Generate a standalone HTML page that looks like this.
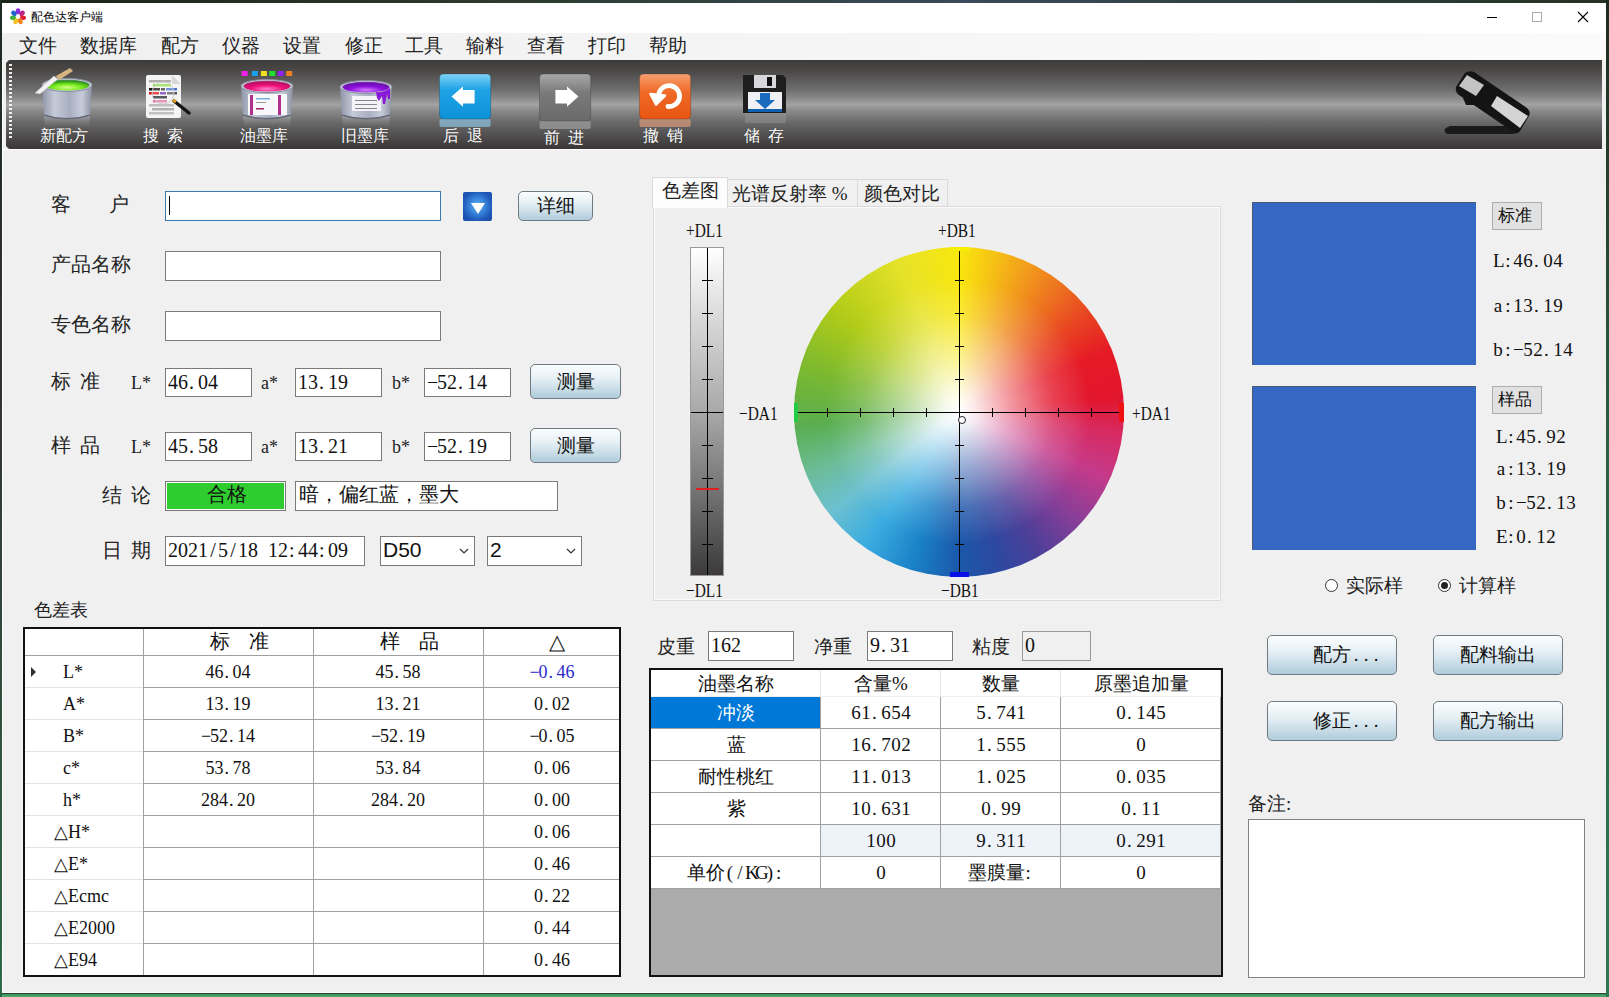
<!DOCTYPE html>
<html><head><meta charset="utf-8"><style>
*{box-sizing:border-box;margin:0;padding:0}
html,body{width:1609px;height:997px;overflow:hidden}
body{position:relative;background:#1f3a2a;font-family:"Liberation Sans",sans-serif;color:#000}
.a{position:absolute}
i.p{font-style:normal;display:inline-block;width:0.5em;text-align:left}
i.c{font-style:normal;display:inline-block;text-align:center}
i.d{font-style:normal;display:inline-block;text-align:left;text-indent:1px}
.inp{position:absolute;background:#fff;border:1px solid #7a7a7a}
.btn{position:absolute;border:1px solid #6f7b82;border-radius:5px;background:linear-gradient(#fbfdfe,#e6f0f5 40%,#b0ccdb);text-align:center;font-family:"Liberation Serif",serif;color:#111}
.lbl{position:absolute;font-family:"Liberation Serif",serif;font-size:19.5px;line-height:20px;color:#222;white-space:pre}
.num{position:absolute;font-family:"Liberation Serif",serif;font-size:20px;line-height:20px;color:#111;white-space:pre}
.tb{position:absolute;color:#fff;font-size:16px;line-height:16px;white-space:pre;text-shadow:0 0 1px #333}
.menu{position:absolute;top:36px;font-size:19px;line-height:20px;color:#222;white-space:pre}
.hl{position:absolute;height:1px}
.vl{position:absolute;width:1px}
.ct{position:absolute;font-family:"Liberation Serif",serif;font-size:18px;line-height:18px;color:#111;white-space:pre;text-align:center}
</style></head><body>

<div class="a" style="left:0;top:0;width:1609px;height:3px;background:linear-gradient(to right,#1a2418,#2b3a2a 30%,#3b4a5a 60%,#243322)"></div>
<div class="a" style="left:0;top:993px;width:1609px;height:4px;background:linear-gradient(#1d4a2c 0,#1d4a2c 1px,#3c8e58 1px,#58a870)"></div>
<div class="a" style="left:1606px;top:0;width:3px;height:997px;background:linear-gradient(#1d2a20,#2a5a40 40%,#2e7a50)"></div>
<div class="a" style="left:0;top:0;width:2px;height:997px;background:linear-gradient(#1d2a20,#333 40%,#2e6a48)"></div>
<div class="a" style="left:2px;top:3px;width:1604px;height:990px;background:#f0f0f0;box-shadow:inset 1px -1px 0 #fff"></div>


<div class="a" style="left:2px;top:3px;width:1604px;height:30px;background:#fff"></div>
<svg class="a" style="left:9px;top:7px" width="18" height="19" viewBox="-9 -9.5 18 19"><ellipse cx="0" cy="-5.2" rx="2.3" ry="3" fill="#8a2be2" transform="rotate(0.0)"/><ellipse cx="0" cy="-5.2" rx="2.3" ry="3" fill="#c0208a" transform="rotate(51.4)"/><ellipse cx="0" cy="-5.2" rx="2.3" ry="3" fill="#e02030" transform="rotate(102.9)"/><ellipse cx="0" cy="-5.2" rx="2.3" ry="3" fill="#f08020" transform="rotate(154.3)"/><ellipse cx="0" cy="-5.2" rx="2.3" ry="3" fill="#f0c020" transform="rotate(205.7)"/><ellipse cx="0" cy="-5.2" rx="2.3" ry="3" fill="#40b040" transform="rotate(257.1)"/><ellipse cx="0" cy="-5.2" rx="2.3" ry="3" fill="#2060d0" transform="rotate(308.6)"/></svg>
<div class="a" style="left:31px;top:10px;font-size:12px;line-height:14px;color:#000">配色达客户端</div>
<div class="a" style="left:1487px;top:17px;width:10px;height:1px;background:#000"></div>
<div class="a" style="left:1532px;top:12px;width:10px;height:10px;border:1px solid #aaa"></div>
<svg class="a" style="left:1577px;top:11px" width="12" height="12"><path d="M1 1L11 11M11 1L1 11" stroke="#000" stroke-width="1.1"/></svg>

<div class="a" style="left:2px;top:33px;width:1604px;height:27px;background:linear-gradient(to right,#efefef,#fbfbfb)"></div>
<div class="menu" style="left:19px">文件</div>
<div class="menu" style="left:80px">数据库</div>
<div class="menu" style="left:161px">配方</div>
<div class="menu" style="left:222px">仪器</div>
<div class="menu" style="left:283px">设置</div>
<div class="menu" style="left:345px">修正</div>
<div class="menu" style="left:405px">工具</div>
<div class="menu" style="left:466px">输料</div>
<div class="menu" style="left:527px">查看</div>
<div class="menu" style="left:588px">打印</div>
<div class="menu" style="left:649px">帮助</div>

<div class="a" style="left:6px;top:60px;width:1596px;height:89px;background:linear-gradient(#3d3a3a 0%,#4e4b4b 14%,#6e6d6d 33%,#8c8d8c 44%,#a2a3a2 50%,#8a8a8a 57%,#6a6969 70%,#525050 84%,#3a3636 100%);clip-path:polygon(3px 0,100% 0,100% 100%,3px 100%,0 calc(100% - 3px),0 3px)"></div>
<div class="a" style="left:9px;top:64px;width:3px;height:75px;background:repeating-linear-gradient(#eee 0 2px,transparent 2px 4px)"></div>

<svg class="a" style="left:0;top:0" width="1609" height="150" viewBox="0 0 1609 150">
<defs>
<linearGradient id="can" x1="0" x2="1" y1="0" y2="0">
 <stop offset="0" stop-color="#8f95a8"/><stop offset=".25" stop-color="#c5cad8"/><stop offset=".55" stop-color="#a9afc2"/><stop offset=".8" stop-color="#c8ccda"/><stop offset="1" stop-color="#8a90a2"/>
</linearGradient>
<linearGradient id="refl" x1="0" x2="0" y1="0" y2="1">
 <stop offset="0" stop-color="#b0b4c4" stop-opacity=".8"/><stop offset="1" stop-color="#909090" stop-opacity=".1"/>
</linearGradient>
<linearGradient id="blue" x1="0" x2="0" y1="0" y2="1">
 <stop offset="0" stop-color="#7fd2f8"/><stop offset=".35" stop-color="#1fa3e6"/><stop offset="1" stop-color="#0d92d8"/>
</linearGradient>
<linearGradient id="gray" x1="0" x2="0" y1="0" y2="1">
 <stop offset="0" stop-color="#a8a8a8"/><stop offset=".4" stop-color="#7a7a7a"/><stop offset="1" stop-color="#6a6a6a"/>
</linearGradient>
<linearGradient id="orng" x1="0" x2="0" y1="0" y2="1">
 <stop offset="0" stop-color="#f6a070"/><stop offset=".4" stop-color="#f06a28"/><stop offset="1" stop-color="#e85512"/>
</linearGradient>
<radialGradient id="green" cx=".5" cy=".7" r=".6">
 <stop offset="0" stop-color="#d8f890"/><stop offset=".5" stop-color="#7cf020"/><stop offset="1" stop-color="#3aa018"/>
</radialGradient>
<radialGradient id="pink" cx=".5" cy=".75" r=".6">
 <stop offset="0" stop-color="#ff80c8"/><stop offset=".6" stop-color="#f0107a"/><stop offset="1" stop-color="#c8106a"/>
</radialGradient>
<radialGradient id="purp" cx=".5" cy=".75" r=".6">
 <stop offset="0" stop-color="#d080ff"/><stop offset=".6" stop-color="#9010e0"/><stop offset="1" stop-color="#7010b8"/>
</radialGradient>
</defs>
<path d="M44 116 Q67.0 123 90 116 L89 126 L45 126 Z" fill="url(#refl)" opacity=".75"/><path d="M42 85 L44 115 Q67.0 122 90 115 L92 85 Z" fill="url(#can)"/><path d="M44 115 Q67.0 122 90 115" fill="none" stroke="#5a6070" stroke-width="1"/><ellipse cx="67.0" cy="85" rx="25.0" ry="6.5" fill="#c8ccd8" stroke="#8a90a0" stroke-width="1"/><ellipse cx="67.0" cy="85.5" rx="22.0" ry="5" fill="url(#green)"/><path d="M45 85.5 A22.0 5 0 0 1 89 85.5" fill="none" stroke="#2a8a30" stroke-width="1.6" opacity=".8"/>
<path d="M35 93 L54 76 L58 79 L40 94 Z" fill="#f2f2f2" stroke="#bbb" stroke-width=".5"/>
<path d="M56 76 L70 68 L73 71 L59 80 Z" fill="#d6b480"/>
<rect x="146" y="75" width="35" height="43" rx="2" fill="#f4f4f4"/>
<path d="M172 75 L181 84 L172 84 Z" fill="#d8d8d8"/>
<rect x="149" y="80" width="22" height="2.5" fill="#b0b0b0"/>
<rect x="153" y="84" width="18" height="2.5" fill="#88dd44"/>
<rect x="149" y="88" width="11" height="2.5" fill="#111"/>
<rect x="161" y="88" width="4" height="2.5" fill="#333"/>
<rect x="166" y="88" width="11" height="2.5" fill="#4a70d0"/>
<rect x="149" y="92" width="10" height="2.5" fill="#dd1010"/>
<rect x="160" y="92" width="6" height="2.5" fill="#6a30b0"/>
<rect x="167" y="92" width="10" height="2.5" fill="#555"/>
<rect x="153" y="96" width="14" height="2.5" fill="#222"/>
<rect x="153" y="100" width="14" height="2.5" fill="#e070a0"/>
<rect x="149" y="104" width="25" height="2.5" fill="#c0c0c0"/>
<rect x="152" y="108" width="22" height="2.5" fill="#b0b0b0"/>
<rect x="149" y="112" width="25" height="2.5" fill="#c0c0c0"/>
<circle cx="163" cy="93" r="11" fill="#ffffff" fill-opacity=".25" stroke="#d0d0d0" stroke-width="1"/>
<path d="M174 101 L189 113" stroke="#151515" stroke-width="3.5" stroke-linecap="round"/>
<path d="M173 100 L176 102" stroke="#d8a020" stroke-width="3"/>
<rect x="241.6" y="71" width="6" height="5" fill="#f020e8"/>
<rect x="251.8" y="71" width="6" height="5" fill="#1aa0f0"/>
<rect x="260.9" y="71" width="6" height="5" fill="#f0e020"/>
<rect x="269.3" y="71" width="6" height="5" fill="#20e030"/>
<rect x="277.8" y="71" width="6" height="5" fill="#9020f0"/>
<rect x="286.2" y="71" width="6" height="5" fill="#f08020"/>
<path d="M243 116 Q267.0 123 291 116 L290 126 L244 126 Z" fill="url(#refl)" opacity=".75"/><path d="M241 86 L243 115 Q267.0 122 291 115 L293 86 Z" fill="url(#can)"/><path d="M243 115 Q267.0 122 291 115" fill="none" stroke="#5a6070" stroke-width="1"/><ellipse cx="267.0" cy="86" rx="26.0" ry="6.5" fill="#c8ccd8" stroke="#8a90a0" stroke-width="1"/><ellipse cx="267.0" cy="86.5" rx="23.0" ry="5" fill="url(#pink)"/><path d="M244 86.5 A23.0 5 0 0 1 290 86.5" fill="none" stroke="#b00c60" stroke-width="1.6" opacity=".8"/>
<rect x="248" y="94" width="39" height="21" fill="#f8f8fa"/>
<rect x="250" y="95" width="3" height="20" fill="#b03090"/><rect x="278" y="95" width="3" height="20" fill="#b03090"/>
<rect x="256" y="98" width="14" height="1.5" fill="#7ab0e0"/><rect x="256" y="102" width="10" height="1" fill="#999"/><rect x="256" y="108" width="8" height="1.5" fill="#a02060"/>
<path d="M342 116 Q366.0 123 390 116 L389 126 L343 126 Z" fill="url(#refl)" opacity=".75"/><path d="M340 87 L342 115 Q366.0 122 390 115 L392 87 Z" fill="url(#can)"/><path d="M342 115 Q366.0 122 390 115" fill="none" stroke="#5a6070" stroke-width="1"/><ellipse cx="366.0" cy="87" rx="26.0" ry="6.5" fill="#c8ccd8" stroke="#8a90a0" stroke-width="1"/><ellipse cx="366.0" cy="87.5" rx="23.0" ry="5" fill="url(#purp)"/><path d="M343 87.5 A23.0 5 0 0 1 389 87.5" fill="none" stroke="#6a10a8" stroke-width="1.6" opacity=".8"/>
<rect x="352" y="96" width="29" height="15" fill="#f4f4f8"/>
<rect x="355" y="100" width="22" height="1" fill="#888"/>
<rect x="355" y="104" width="22" height="1" fill="#888"/>
<rect x="355" y="108" width="22" height="1" fill="#888"/>
<path d="M376 92 Q384 93 390 88 L390 99 L388 99 L387 94 L385 104 L383 104 L382 96 L379 101 L377 98 Z" fill="#8a18d8"/>
<rect x="439.5" y="119" width="51.19999999999999" height="8" rx="2" fill="#8ac0dc" opacity=".7"/><rect x="439.5" y="74" width="51.19999999999999" height="45" rx="4" fill="url(#blue)" stroke="#0a0a0a" stroke-opacity=".25" stroke-width=".8"/>
<path d="M451.5 96.5 L463 86.4 L463 90 L474.6 90 L474.6 103.5 L463 103.5 L463 106.8 Z" fill="#fff"/>
<rect x="539.5" y="121" width="51.200000000000045" height="8" rx="2" fill="#a0a0a0" opacity=".7"/><rect x="539.5" y="74" width="51.200000000000045" height="47" rx="4" fill="url(#gray)" stroke="#0a0a0a" stroke-opacity=".25" stroke-width=".8"/>
<path d="M578.5 96.5 L567 86.4 L567 90 L555.4 90 L555.4 103.5 L567 103.5 L567 106.8 Z" fill="#fff"/>
<rect x="639.5" y="119" width="51.200000000000045" height="8" rx="2" fill="#d89878" opacity=".7"/><rect x="639.5" y="74" width="51.200000000000045" height="45" rx="4" fill="url(#orng)" stroke="#0a0a0a" stroke-opacity=".25" stroke-width=".8"/>
<path d="M668 106.5 A10.5 10.5 0 1 0 659 93" fill="none" stroke="#fff" stroke-width="4.8" stroke-linecap="round"/>
<path d="M650.5 94 L665 95.5 L656 104.5 Z" fill="#fff" stroke="#fff" stroke-width="2.5" stroke-linejoin="round"/>
<rect x="745" y="113" width="41" height="10" fill="#9a9a9a" opacity=".45"/>
<path d="M743 75 L783 75 L786 78 L786 113 L743 113 Z" fill="#1e1e1e"/>
<rect x="754" y="75" width="22" height="13" fill="#d8d8dc"/><rect x="767" y="77" width="5" height="9" fill="#111"/>
<rect x="748" y="92" width="34" height="18" fill="#eef0f4"/>
<rect x="748" y="109" width="34" height="3" fill="#1060b0"/>
<path d="M760 93 L770 93 L770 100 L775 100 L765 109 L755 100 L760 100 Z" fill="#1a6ac0"/>
<path d="M1446 128 Q1444 129 1445 132 Q1446 134 1450 134 L1512 134 Q1518 134 1520 131 L1514 126 L1450 126 Z" fill="#1a1a1a"/>
<path d="M1463 98 L1478 98 L1478 105 L1466 105 Z" fill="#161616"/>
<path d="M1465 73 Q1469 70 1474 72 L1527 108 Q1531 112 1529 116 L1520 131 Q1517 134 1512 131 L1459 95 Q1455 92 1456 87 Z" fill="#141414"/>
<path d="M1467 75 L1484 85 L1476 96 L1459 86 Z" fill="#c4c4c4"/>
<path d="M1497 96 L1528 116 L1520 128 L1491 106 Z" fill="#d4d4d4"/>
</svg>
<div class="tb" style="left:40px;top:128px">新配方</div>
<div class="tb" style="left:143px;top:128px">搜</div><div class="tb" style="left:167px;top:128px">索</div>
<div class="tb" style="left:240px;top:128px">油墨库</div>
<div class="tb" style="left:341px;top:128px">旧墨库</div>
<div class="tb" style="left:443px;top:128px">后</div><div class="tb" style="left:467px;top:128px">退</div>
<div class="tb" style="left:544px;top:130px">前</div><div class="tb" style="left:568px;top:130px">进</div>
<div class="tb" style="left:643px;top:128px">撤</div><div class="tb" style="left:667px;top:128px">销</div>
<div class="tb" style="left:744px;top:128px">储</div><div class="tb" style="left:768px;top:128px">存</div>
<div class="a" style="left:2px;top:149px;width:1604px;height:1px;background:#fff"></div>

<div class="lbl" style="left:51px;top:195px">客</div><div class="lbl" style="left:109px;top:195px">户</div>
<div class="inp" style="left:165px;top:191px;width:276px;height:30px;border-color:#3a78b0"></div>
<div class="a" style="left:169px;top:196px;width:1px;height:19px;background:#000"></div>
<div class="a" style="left:463px;top:192px;width:29px;height:29px;border-radius:2px;background:radial-gradient(circle at 50% 48%,#62b8f4 0%,#3a86dc 35%,#1e58b8 70%,#1a4aa4 100%)"></div>
<svg class="a" style="left:470px;top:202px" width="16" height="13"><path d="M1 1H15L8 12Z" fill="#fff"/></svg>
<div class="btn" style="left:518px;top:191px;width:75px;height:30px;font-size:19px;line-height:28px">详细</div>
<div class="lbl" style="left:51px;top:255px">产品名称</div>
<div class="inp" style="left:165px;top:251px;width:276px;height:30px"></div>
<div class="lbl" style="left:51px;top:315px">专色名称</div>
<div class="inp" style="left:165px;top:311px;width:276px;height:30px"></div>

<div class="lbl" style="left:51px;top:372px">标</div><div class="lbl" style="left:80px;top:372px">准</div>
<div class="lbl" style="left:131px;top:373px;font-size:18px">L*</div>
<div class="inp" style="left:165px;top:368px;width:87px;height:29px"></div>
<div class="num" style="left:168px;top:372px"><i class="c" style="width:10px">4</i><i class="c" style="width:10px">6</i><i class="d" style="width:10px">.</i><i class="c" style="width:10px">0</i><i class="c" style="width:10px">4</i></div>
<div class="lbl" style="left:261px;top:373px;font-size:18px">a*</div>
<div class="inp" style="left:295px;top:368px;width:87px;height:29px"></div>
<div class="num" style="left:298px;top:372px"><i class="c" style="width:10px">1</i><i class="c" style="width:10px">3</i><i class="d" style="width:10px">.</i><i class="c" style="width:10px">1</i><i class="c" style="width:10px">9</i></div>
<div class="lbl" style="left:392px;top:373px;font-size:18px">b*</div>
<div class="inp" style="left:424px;top:368px;width:87px;height:29px"></div>
<div class="num" style="left:427px;top:372px"><i class="c" style="width:10px">−</i><i class="c" style="width:10px">5</i><i class="c" style="width:10px">2</i><i class="d" style="width:10px">.</i><i class="c" style="width:10px">1</i><i class="c" style="width:10px">4</i></div>
<div class="btn" style="left:530px;top:364px;width:91px;height:35px;font-size:19px;line-height:33px">测量</div>
<div class="lbl" style="left:51px;top:436px">样</div><div class="lbl" style="left:80px;top:436px">品</div>
<div class="lbl" style="left:131px;top:437px;font-size:18px">L*</div>
<div class="inp" style="left:165px;top:432px;width:87px;height:29px"></div>
<div class="num" style="left:168px;top:436px"><i class="c" style="width:10px">4</i><i class="c" style="width:10px">5</i><i class="d" style="width:10px">.</i><i class="c" style="width:10px">5</i><i class="c" style="width:10px">8</i></div>
<div class="lbl" style="left:261px;top:437px;font-size:18px">a*</div>
<div class="inp" style="left:295px;top:432px;width:87px;height:29px"></div>
<div class="num" style="left:298px;top:436px"><i class="c" style="width:10px">1</i><i class="c" style="width:10px">3</i><i class="d" style="width:10px">.</i><i class="c" style="width:10px">2</i><i class="c" style="width:10px">1</i></div>
<div class="lbl" style="left:392px;top:437px;font-size:18px">b*</div>
<div class="inp" style="left:424px;top:432px;width:87px;height:29px"></div>
<div class="num" style="left:427px;top:436px"><i class="c" style="width:10px">−</i><i class="c" style="width:10px">5</i><i class="c" style="width:10px">2</i><i class="d" style="width:10px">.</i><i class="c" style="width:10px">1</i><i class="c" style="width:10px">9</i></div>
<div class="btn" style="left:530px;top:428px;width:91px;height:35px;font-size:19px;line-height:33px">测量</div>

<div class="lbl" style="left:102px;top:486px">结</div><div class="lbl" style="left:131px;top:486px">论</div>
<div class="a" style="left:165px;top:481px;width:121px;height:30px;background:#2fcc2f;border:1px solid #7a7a7a;box-shadow:inset 0 0 0 1px #fff"></div>
<div class="lbl" style="left:207px;top:485px;color:#111">合格</div>
<div class="inp" style="left:295px;top:481px;width:263px;height:30px"></div>
<div class="lbl" style="left:299px;top:485px;color:#111">暗，偏红蓝，墨大</div>
<div class="lbl" style="left:102px;top:541px">日</div><div class="lbl" style="left:131px;top:541px">期</div>
<div class="inp" style="left:165px;top:536px;width:200px;height:30px"></div>

<div class="num" style="left:168px;top:540px"><i class="c" style="width:10px">2</i><i class="c" style="width:10px">0</i><i class="c" style="width:10px">2</i><i class="c" style="width:10px">1</i><i class="c" style="width:10px">/</i><i class="c" style="width:10px">5</i><i class="c" style="width:10px">/</i><i class="c" style="width:10px">1</i><i class="c" style="width:10px">8</i><i class="c" style="width:10px">&nbsp;</i><i class="c" style="width:10px">1</i><i class="c" style="width:10px">2</i><i class="d" style="width:10px">:</i><i class="c" style="width:10px">4</i><i class="c" style="width:10px">4</i><i class="d" style="width:10px">:</i><i class="c" style="width:10px">0</i><i class="c" style="width:10px">9</i></div>

<div class="inp" style="left:380px;top:536px;width:95px;height:30px"></div>
<div class="num" style="left:383px;top:540px;font-size:21px;font-family:'Liberation Sans',sans-serif">D50</div>
<svg class="a" style="left:459px;top:548px" width="10" height="6"><path d="M1 1L5 5L9 1" fill="none" stroke="#333" stroke-width="1.2"/></svg>
<div class="inp" style="left:487px;top:536px;width:95px;height:30px"></div>
<div class="num" style="left:490px;top:540px;font-size:21px;font-family:'Liberation Sans',sans-serif">2</div>
<svg class="a" style="left:566px;top:548px" width="10" height="6"><path d="M1 1L5 5L9 1" fill="none" stroke="#333" stroke-width="1.2"/></svg>
<div class="lbl" style="left:34px;top:600px;font-size:18px">色差表</div>

<div class="a" style="left:23px;top:627px;width:598px;height:350px;background:#fff;border:2px solid #111"></div>
<div class="vl" style="left:143px;top:629px;height:346px;background:#a0a0a0"></div>
<div class="vl" style="left:313px;top:629px;height:346px;background:#a0a0a0"></div>
<div class="vl" style="left:483px;top:629px;height:346px;background:#a0a0a0"></div>
<div class="hl" style="left:25px;top:655px;width:594px;background:#a0a0a0"></div>
<div class="hl" style="left:25px;top:687px;width:118px;background:#e2e2e2"></div>
<div class="hl" style="left:144px;top:687px;width:475px;background:#a0a0a0"></div>
<div class="hl" style="left:25px;top:719px;width:118px;background:#e2e2e2"></div>
<div class="hl" style="left:144px;top:719px;width:475px;background:#a0a0a0"></div>
<div class="hl" style="left:25px;top:751px;width:118px;background:#e2e2e2"></div>
<div class="hl" style="left:144px;top:751px;width:475px;background:#a0a0a0"></div>
<div class="hl" style="left:25px;top:783px;width:118px;background:#e2e2e2"></div>
<div class="hl" style="left:144px;top:783px;width:475px;background:#a0a0a0"></div>
<div class="hl" style="left:25px;top:815px;width:118px;background:#e2e2e2"></div>
<div class="hl" style="left:144px;top:815px;width:475px;background:#a0a0a0"></div>
<div class="hl" style="left:25px;top:847px;width:118px;background:#e2e2e2"></div>
<div class="hl" style="left:144px;top:847px;width:475px;background:#a0a0a0"></div>
<div class="hl" style="left:25px;top:879px;width:118px;background:#e2e2e2"></div>
<div class="hl" style="left:144px;top:879px;width:475px;background:#a0a0a0"></div>
<div class="hl" style="left:25px;top:911px;width:118px;background:#e2e2e2"></div>
<div class="hl" style="left:144px;top:911px;width:475px;background:#a0a0a0"></div>
<div class="hl" style="left:25px;top:943px;width:118px;background:#e2e2e2"></div>
<div class="hl" style="left:144px;top:943px;width:475px;background:#a0a0a0"></div>
<div class="ct" style="left:210px;top:632px;font-size:19.5px;line-height:20px">标</div><div class="ct" style="left:249px;top:632px;font-size:19.5px;line-height:20px">准</div>
<div class="ct" style="left:380px;top:632px;font-size:19.5px;line-height:20px">样</div><div class="ct" style="left:419px;top:632px;font-size:19.5px;line-height:20px">品</div>
<div class="ct" style="left:549px;top:631px;font-size:21px;line-height:22px">△</div>
<svg class="a" style="left:31px;top:667px" width="6" height="10"><path d="M0 0L5 5L0 10Z" fill="#333"/></svg>
<div class="ct" style="left:63px;top:663px;text-align:left">L*</div>
<div class="ct" style="left:143px;top:663px;width:170px"><i class="c" style="width:9px">4</i><i class="c" style="width:9px">6</i><i class="d" style="width:9px">.</i><i class="c" style="width:9px">0</i><i class="c" style="width:9px">4</i></div>
<div class="ct" style="left:313px;top:663px;width:170px"><i class="c" style="width:9px">4</i><i class="c" style="width:9px">5</i><i class="d" style="width:9px">.</i><i class="c" style="width:9px">5</i><i class="c" style="width:9px">8</i></div>
<div class="ct" style="left:483px;top:663px;width:138px;color:#2a2acc"><i class="c" style="width:9px">−</i><i class="c" style="width:9px">0</i><i class="d" style="width:9px">.</i><i class="c" style="width:9px">4</i><i class="c" style="width:9px">6</i></div>
<div class="ct" style="left:63px;top:695px;text-align:left">A*</div>
<div class="ct" style="left:143px;top:695px;width:170px"><i class="c" style="width:9px">1</i><i class="c" style="width:9px">3</i><i class="d" style="width:9px">.</i><i class="c" style="width:9px">1</i><i class="c" style="width:9px">9</i></div>
<div class="ct" style="left:313px;top:695px;width:170px"><i class="c" style="width:9px">1</i><i class="c" style="width:9px">3</i><i class="d" style="width:9px">.</i><i class="c" style="width:9px">2</i><i class="c" style="width:9px">1</i></div>
<div class="ct" style="left:483px;top:695px;width:138px;color:#111"><i class="c" style="width:9px">0</i><i class="d" style="width:9px">.</i><i class="c" style="width:9px">0</i><i class="c" style="width:9px">2</i></div>
<div class="ct" style="left:63px;top:727px;text-align:left">B*</div>
<div class="ct" style="left:143px;top:727px;width:170px"><i class="c" style="width:9px">−</i><i class="c" style="width:9px">5</i><i class="c" style="width:9px">2</i><i class="d" style="width:9px">.</i><i class="c" style="width:9px">1</i><i class="c" style="width:9px">4</i></div>
<div class="ct" style="left:313px;top:727px;width:170px"><i class="c" style="width:9px">−</i><i class="c" style="width:9px">5</i><i class="c" style="width:9px">2</i><i class="d" style="width:9px">.</i><i class="c" style="width:9px">1</i><i class="c" style="width:9px">9</i></div>
<div class="ct" style="left:483px;top:727px;width:138px;color:#111"><i class="c" style="width:9px">−</i><i class="c" style="width:9px">0</i><i class="d" style="width:9px">.</i><i class="c" style="width:9px">0</i><i class="c" style="width:9px">5</i></div>
<div class="ct" style="left:63px;top:759px;text-align:left">c*</div>
<div class="ct" style="left:143px;top:759px;width:170px"><i class="c" style="width:9px">5</i><i class="c" style="width:9px">3</i><i class="d" style="width:9px">.</i><i class="c" style="width:9px">7</i><i class="c" style="width:9px">8</i></div>
<div class="ct" style="left:313px;top:759px;width:170px"><i class="c" style="width:9px">5</i><i class="c" style="width:9px">3</i><i class="d" style="width:9px">.</i><i class="c" style="width:9px">8</i><i class="c" style="width:9px">4</i></div>
<div class="ct" style="left:483px;top:759px;width:138px;color:#111"><i class="c" style="width:9px">0</i><i class="d" style="width:9px">.</i><i class="c" style="width:9px">0</i><i class="c" style="width:9px">6</i></div>
<div class="ct" style="left:63px;top:791px;text-align:left">h*</div>
<div class="ct" style="left:143px;top:791px;width:170px"><i class="c" style="width:9px">2</i><i class="c" style="width:9px">8</i><i class="c" style="width:9px">4</i><i class="d" style="width:9px">.</i><i class="c" style="width:9px">2</i><i class="c" style="width:9px">0</i></div>
<div class="ct" style="left:313px;top:791px;width:170px"><i class="c" style="width:9px">2</i><i class="c" style="width:9px">8</i><i class="c" style="width:9px">4</i><i class="d" style="width:9px">.</i><i class="c" style="width:9px">2</i><i class="c" style="width:9px">0</i></div>
<div class="ct" style="left:483px;top:791px;width:138px;color:#111"><i class="c" style="width:9px">0</i><i class="d" style="width:9px">.</i><i class="c" style="width:9px">0</i><i class="c" style="width:9px">0</i></div>
<div class="ct" style="left:54px;top:823px;text-align:left">△H*</div>
<div class="ct" style="left:483px;top:823px;width:138px;color:#111"><i class="c" style="width:9px">0</i><i class="d" style="width:9px">.</i><i class="c" style="width:9px">0</i><i class="c" style="width:9px">6</i></div>
<div class="ct" style="left:54px;top:855px;text-align:left">△E*</div>
<div class="ct" style="left:483px;top:855px;width:138px;color:#111"><i class="c" style="width:9px">0</i><i class="d" style="width:9px">.</i><i class="c" style="width:9px">4</i><i class="c" style="width:9px">6</i></div>
<div class="ct" style="left:54px;top:887px;text-align:left">△Ecmc</div>
<div class="ct" style="left:483px;top:887px;width:138px;color:#111"><i class="c" style="width:9px">0</i><i class="d" style="width:9px">.</i><i class="c" style="width:9px">2</i><i class="c" style="width:9px">2</i></div>
<div class="ct" style="left:54px;top:919px;text-align:left">△E2000</div>
<div class="ct" style="left:483px;top:919px;width:138px;color:#111"><i class="c" style="width:9px">0</i><i class="d" style="width:9px">.</i><i class="c" style="width:9px">4</i><i class="c" style="width:9px">4</i></div>
<div class="ct" style="left:54px;top:951px;text-align:left">△E94</div>
<div class="ct" style="left:483px;top:951px;width:138px;color:#111"><i class="c" style="width:9px">0</i><i class="d" style="width:9px">.</i><i class="c" style="width:9px">4</i><i class="c" style="width:9px">6</i></div>
<div class="a" style="left:653px;top:206px;width:568px;height:395px;border:1px solid #dadada;box-shadow:inset 0 0 0 1px #fafafa;background:#efefef"></div>
<div class="a" style="left:727px;top:179px;width:131px;height:27px;border:1px solid #dadada;border-bottom:none;background:#f0f0f0"></div>
<div class="a" style="left:857px;top:179px;width:91px;height:27px;border:1px solid #dadada;border-bottom:none;background:#f0f0f0"></div>
<div class="a" style="left:652px;top:177px;width:76px;height:31px;border:1px solid #dadada;border-bottom:none;background:#fcfcfc"></div>
<div class="lbl" style="left:662px;top:181px;font-size:19px">色差图</div>
<div class="lbl" style="left:732px;top:184px;font-size:19px">光谱反射率 %</div>
<div class="lbl" style="left:864px;top:184px;font-size:19px">颜色对比</div>
<div class="a" style="left:690px;top:247px;width:34px;height:329px;border:1px solid #9a9a9a;background:linear-gradient(#ffffff 0%,#d8d8d8 22%,#a9a9a9 50%,#727272 75%,#3c3a3a 100%)"></div>
<div class="vl" style="left:707px;top:248px;height:327px;background:#000"></div>
<div class="hl" style="left:702px;top:280px;width:11px;background:#000"></div>
<div class="hl" style="left:702px;top:313px;width:11px;background:#000"></div>
<div class="hl" style="left:702px;top:346px;width:11px;background:#000"></div>
<div class="hl" style="left:702px;top:379px;width:11px;background:#000"></div>
<div class="hl" style="left:691px;top:412px;width:32px;background:#000"></div>
<div class="hl" style="left:702px;top:445px;width:11px;background:#000"></div>
<div class="hl" style="left:702px;top:478px;width:11px;background:#000"></div>
<div class="hl" style="left:702px;top:511px;width:11px;background:#000"></div>
<div class="hl" style="left:702px;top:544px;width:11px;background:#000"></div>
<div class="a" style="left:696px;top:488px;width:23px;height:2px;background:#e02020"></div>
<div class="ct" style="left:686px;top:221px;font-size:19px;line-height:19px;transform:scaleX(0.81);transform-origin:0 0">+DL1</div>
<div class="ct" style="left:686px;top:581px;font-size:19px;line-height:19px;transform:scaleX(0.81);transform-origin:0 0">−DL1</div>
<div class="ct" style="left:938px;top:221px;font-size:19px;line-height:19px;transform:scaleX(0.81);transform-origin:0 0">+DB1</div>
<div class="ct" style="left:941px;top:581px;font-size:19px;line-height:19px;transform:scaleX(0.81);transform-origin:0 0">−DB1</div>
<div class="ct" style="left:739px;top:404px;font-size:19px;line-height:19px;transform:scaleX(0.81);transform-origin:0 0">−DA1</div>
<div class="ct" style="left:1132px;top:404px;font-size:19px;line-height:19px;transform:scaleX(0.81);transform-origin:0 0">+DA1</div>
<div class="a" style="left:794px;top:247px;width:330px;height:330px;border-radius:50%;background:conic-gradient(#f9e70e 0deg,#f6c414 12deg,#f29a1c 26deg,#ec6e20 40deg,#e84022 54deg,#e51a26 68deg,#e2162e 85deg,#d82a60 97deg,#c43a8a 114deg,#8a3e98 132deg,#4e3f98 150deg,#2d48a0 165deg,#1a58aa 180deg,#1a82c8 197deg,#3aace0 215deg,#6cc0d0 232deg,#6cbc98 248deg,#5aae50 265deg,#7ab830 285deg,#b2cc18 310deg,#e6e22a 338deg,#f9e70e 360deg)"></div>
<div class="a" style="left:794px;top:247px;width:330px;height:330px;border-radius:50%;background:radial-gradient(circle closest-side,rgba(255,255,255,1) 0%,rgba(255,255,255,.9) 10%,rgba(255,255,255,.55) 32%,rgba(255,255,255,.18) 58%,rgba(255,255,255,0) 80%)"></div>
<div class="hl" style="left:794px;top:412px;width:330px;background:#000"></div>
<div class="vl" style="left:959px;top:247px;height:330px;background:#000"></div>
<div class="vl" style="left:827px;top:408px;height:9px;background:#000"></div>
<div class="hl" style="left:955px;top:280px;width:9px;background:#000"></div>
<div class="vl" style="left:860px;top:408px;height:9px;background:#000"></div>
<div class="hl" style="left:955px;top:313px;width:9px;background:#000"></div>
<div class="vl" style="left:893px;top:408px;height:9px;background:#000"></div>
<div class="hl" style="left:955px;top:346px;width:9px;background:#000"></div>
<div class="vl" style="left:926px;top:408px;height:9px;background:#000"></div>
<div class="hl" style="left:955px;top:379px;width:9px;background:#000"></div>
<div class="vl" style="left:992px;top:408px;height:9px;background:#000"></div>
<div class="hl" style="left:955px;top:445px;width:9px;background:#000"></div>
<div class="vl" style="left:1025px;top:408px;height:9px;background:#000"></div>
<div class="hl" style="left:955px;top:478px;width:9px;background:#000"></div>
<div class="vl" style="left:1058px;top:408px;height:9px;background:#000"></div>
<div class="hl" style="left:955px;top:511px;width:9px;background:#000"></div>
<div class="vl" style="left:1091px;top:408px;height:9px;background:#000"></div>
<div class="hl" style="left:955px;top:544px;width:9px;background:#000"></div>
<div class="a" style="left:950px;top:247px;width:19px;height:4px;background:#f8f000"></div>
<div class="a" style="left:950px;top:572px;width:19px;height:5px;background:#0a10e8"></div>
<div class="a" style="left:794px;top:403px;width:4px;height:19px;background:#22cc44"></div>
<div class="a" style="left:1119px;top:403px;width:5px;height:19px;background:#f01010"></div>
<div class="a" style="left:958px;top:416px;width:8px;height:8px;border-radius:50%;border:1.2px solid #222;background:#fff"></div>
<div class="a" style="left:1252px;top:202px;width:224px;height:163px;background:#3468c2;box-shadow:inset 1px 1px 0 #4a5870"></div>
<div class="a" style="left:1252px;top:386px;width:224px;height:164px;background:#3468c2;box-shadow:inset 1px 1px 0 #4a5870"></div>
<div class="a" style="left:1492px;top:202px;width:50px;height:28px;border:1px solid #adadad;background:#e1e1e1"></div>
<div class="lbl" style="left:1498px;top:206px;font-size:17px;color:#111">标准</div>
<div class="a" style="left:1492px;top:386px;width:50px;height:28px;border:1px solid #adadad;background:#e1e1e1"></div>
<div class="lbl" style="left:1498px;top:390px;font-size:17px;color:#111">样品</div>
<div class="num" style="left:1493px;top:251px;font-size:19px"><i class=c style="width:10px">L</i><i class=c style="width:10px">:</i><i class=c style="width:10px">4</i><i class=c style="width:10px">6</i><i class=d style="width:10px">.</i><i class=c style="width:10px">0</i><i class=c style="width:10px">4</i></div>
<div class="num" style="left:1493px;top:296px;font-size:19px"><i class=c style="width:10px">a</i><i class=c style="width:10px">:</i><i class=c style="width:10px">1</i><i class=c style="width:10px">3</i><i class=d style="width:10px">.</i><i class=c style="width:10px">1</i><i class=c style="width:10px">9</i></div>
<div class="num" style="left:1493px;top:340px;font-size:19px"><i class=c style="width:10px">b</i><i class=c style="width:10px">:</i><i class=c style="width:10px">−</i><i class=c style="width:10px">5</i><i class=c style="width:10px">2</i><i class=d style="width:10px">.</i><i class=c style="width:10px">1</i><i class=c style="width:10px">4</i></div>
<div class="num" style="left:1496px;top:427px;font-size:19px"><i class=c style="width:10px">L</i><i class=c style="width:10px">:</i><i class=c style="width:10px">4</i><i class=c style="width:10px">5</i><i class=d style="width:10px">.</i><i class=c style="width:10px">9</i><i class=c style="width:10px">2</i></div>
<div class="num" style="left:1496px;top:459px;font-size:19px"><i class=c style="width:10px">a</i><i class=c style="width:10px">:</i><i class=c style="width:10px">1</i><i class=c style="width:10px">3</i><i class=d style="width:10px">.</i><i class=c style="width:10px">1</i><i class=c style="width:10px">9</i></div>
<div class="num" style="left:1496px;top:493px;font-size:19px"><i class=c style="width:10px">b</i><i class=c style="width:10px">:</i><i class=c style="width:10px">−</i><i class=c style="width:10px">5</i><i class=c style="width:10px">2</i><i class=d style="width:10px">.</i><i class=c style="width:10px">1</i><i class=c style="width:10px">3</i></div>
<div class="num" style="left:1496px;top:527px;font-size:19px"><i class=c style="width:10px">E</i><i class=c style="width:10px">:</i><i class=c style="width:10px">0</i><i class=d style="width:10px">.</i><i class=c style="width:10px">1</i><i class=c style="width:10px">2</i></div>
<div class="a" style="left:1325px;top:579px;width:13px;height:13px;border-radius:50%;border:1px solid #333;background:#fff"></div>
<div class="lbl" style="left:1346px;top:576px;font-size:19px">实际样</div>
<div class="a" style="left:1438px;top:579px;width:13px;height:13px;border-radius:50%;border:1px solid #333;background:#fff"></div>
<div class="a" style="left:1441px;top:582px;width:7px;height:7px;border-radius:50%;background:#222"></div>
<div class="lbl" style="left:1459px;top:576px;font-size:19px">计算样</div>
<div class="btn" style="left:1267px;top:635px;width:130px;height:40px"></div>
<div class="lbl" style="left:1313px;top:645px;font-size:19px;color:#111">配方<i class=c style="width:10px">.</i><i class=c style="width:10px">.</i><i class=c style="width:10px">.</i></div>
<div class="btn" style="left:1433px;top:635px;width:130px;height:40px;font-size:19px;line-height:38px">配料输出</div>
<div class="btn" style="left:1267px;top:701px;width:130px;height:40px"></div>
<div class="lbl" style="left:1313px;top:711px;font-size:19px;color:#111">修正<i class=c style="width:10px">.</i><i class=c style="width:10px">.</i><i class=c style="width:10px">.</i></div>
<div class="btn" style="left:1433px;top:701px;width:130px;height:40px;font-size:19px;line-height:38px">配方输出</div>
<div class="lbl" style="left:1248px;top:794px;font-size:19px">备注:</div>
<div class="inp" style="left:1248px;top:819px;width:337px;height:159px;border-color:#828282"></div>
<div class="lbl" style="left:657px;top:637px;font-size:19px">皮重</div>
<div class="inp" style="left:708px;top:631px;width:86px;height:30px"></div>
<div class="num" style="left:711px;top:635px"><i class="c" style="width:10px">1</i><i class="c" style="width:10px">6</i><i class="c" style="width:10px">2</i></div>
<div class="lbl" style="left:814px;top:637px;font-size:19px">净重</div>
<div class="inp" style="left:867px;top:631px;width:86px;height:30px"></div>
<div class="num" style="left:870px;top:635px"><i class="c" style="width:10px">9</i><i class="d" style="width:10px">.</i><i class="c" style="width:10px">3</i><i class="c" style="width:10px">1</i></div>
<div class="lbl" style="left:972px;top:637px;font-size:19px">粘度</div>
<div class="inp" style="left:1022px;top:631px;width:69px;height:30px;background:#f0f0f0;border-color:#9a9a9a"></div>
<div class="num" style="left:1025px;top:635px"><i class="c" style="width:10px">0</i></div>
<div class="a" style="left:649px;top:668px;width:574px;height:309px;background:#ababab;border:2px solid #111"></div>
<div class="a" style="left:651px;top:670px;width:570px;height:219px;background:#fff"></div>
<div class="a" style="left:651px;top:697px;width:169px;height:31px;background:#0078d7"></div>
<div class="a" style="left:821px;top:825px;width:400px;height:31px;background:#eef3fa"></div>
<div class="hl" style="left:651px;top:696px;width:570px;background:#f0f0f0"></div>
<div class="hl" style="left:651px;top:728px;width:570px;background:#a0a0a0"></div>
<div class="hl" style="left:651px;top:760px;width:570px;background:#a0a0a0"></div>
<div class="hl" style="left:651px;top:792px;width:570px;background:#a0a0a0"></div>
<div class="hl" style="left:651px;top:824px;width:570px;background:#a0a0a0"></div>
<div class="hl" style="left:651px;top:856px;width:570px;background:#a0a0a0"></div>
<div class="hl" style="left:651px;top:888px;width:570px;background:#a0a0a0"></div>
<div class="vl" style="left:820px;top:670px;height:27px;background:#e6e6e6"></div>
<div class="vl" style="left:820px;top:697px;height:192px;background:#a0a0a0"></div>
<div class="vl" style="left:940px;top:670px;height:27px;background:#e6e6e6"></div>
<div class="vl" style="left:940px;top:697px;height:192px;background:#a0a0a0"></div>
<div class="vl" style="left:1060px;top:670px;height:27px;background:#e6e6e6"></div>
<div class="vl" style="left:1060px;top:697px;height:192px;background:#a0a0a0"></div>
<div class="vl" style="left:1220px;top:670px;height:27px;background:#e6e6e6"></div>
<div class="vl" style="left:1220px;top:697px;height:192px;background:#a0a0a0"></div>
<div class="ct" style="left:651px;top:674px;width:170px;font-size:19px;line-height:19px">油墨名称</div>
<div class="ct" style="left:821px;top:674px;width:120px;font-size:19px;line-height:19px">含量%</div>
<div class="ct" style="left:941px;top:674px;width:120px;font-size:19px;line-height:19px">数量</div>
<div class="ct" style="left:1061px;top:674px;width:160px;font-size:19px;line-height:19px">原墨追加量</div>
<div class="ct" style="left:651px;top:703px;width:170px;font-size:19px;line-height:19px;color:#fff">冲淡</div>
<div class="ct" style="left:821px;top:703px;width:120px;font-size:19px;line-height:19px;color:#111"><i class="c" style="width:10px">6</i><i class="c" style="width:10px">1</i><i class="d" style="width:10px">.</i><i class="c" style="width:10px">6</i><i class="c" style="width:10px">5</i><i class="c" style="width:10px">4</i></div>
<div class="ct" style="left:941px;top:703px;width:120px;font-size:19px;line-height:19px;color:#111"><i class="c" style="width:10px">5</i><i class="d" style="width:10px">.</i><i class="c" style="width:10px">7</i><i class="c" style="width:10px">4</i><i class="c" style="width:10px">1</i></div>
<div class="ct" style="left:1061px;top:703px;width:160px;font-size:19px;line-height:19px;color:#111"><i class="c" style="width:10px">0</i><i class="d" style="width:10px">.</i><i class="c" style="width:10px">1</i><i class="c" style="width:10px">4</i><i class="c" style="width:10px">5</i></div>
<div class="ct" style="left:651px;top:735px;width:170px;font-size:19px;line-height:19px;color:#111">蓝</div>
<div class="ct" style="left:821px;top:735px;width:120px;font-size:19px;line-height:19px;color:#111"><i class="c" style="width:10px">1</i><i class="c" style="width:10px">6</i><i class="d" style="width:10px">.</i><i class="c" style="width:10px">7</i><i class="c" style="width:10px">0</i><i class="c" style="width:10px">2</i></div>
<div class="ct" style="left:941px;top:735px;width:120px;font-size:19px;line-height:19px;color:#111"><i class="c" style="width:10px">1</i><i class="d" style="width:10px">.</i><i class="c" style="width:10px">5</i><i class="c" style="width:10px">5</i><i class="c" style="width:10px">5</i></div>
<div class="ct" style="left:1061px;top:735px;width:160px;font-size:19px;line-height:19px;color:#111"><i class="c" style="width:10px">0</i></div>
<div class="ct" style="left:651px;top:767px;width:170px;font-size:19px;line-height:19px;color:#111">耐性桃红</div>
<div class="ct" style="left:821px;top:767px;width:120px;font-size:19px;line-height:19px;color:#111"><i class="c" style="width:10px">1</i><i class="c" style="width:10px">1</i><i class="d" style="width:10px">.</i><i class="c" style="width:10px">0</i><i class="c" style="width:10px">1</i><i class="c" style="width:10px">3</i></div>
<div class="ct" style="left:941px;top:767px;width:120px;font-size:19px;line-height:19px;color:#111"><i class="c" style="width:10px">1</i><i class="d" style="width:10px">.</i><i class="c" style="width:10px">0</i><i class="c" style="width:10px">2</i><i class="c" style="width:10px">5</i></div>
<div class="ct" style="left:1061px;top:767px;width:160px;font-size:19px;line-height:19px;color:#111"><i class="c" style="width:10px">0</i><i class="d" style="width:10px">.</i><i class="c" style="width:10px">0</i><i class="c" style="width:10px">3</i><i class="c" style="width:10px">5</i></div>
<div class="ct" style="left:651px;top:799px;width:170px;font-size:19px;line-height:19px;color:#111">紫</div>
<div class="ct" style="left:821px;top:799px;width:120px;font-size:19px;line-height:19px;color:#111"><i class="c" style="width:10px">1</i><i class="c" style="width:10px">0</i><i class="d" style="width:10px">.</i><i class="c" style="width:10px">6</i><i class="c" style="width:10px">3</i><i class="c" style="width:10px">1</i></div>
<div class="ct" style="left:941px;top:799px;width:120px;font-size:19px;line-height:19px;color:#111"><i class="c" style="width:10px">0</i><i class="d" style="width:10px">.</i><i class="c" style="width:10px">9</i><i class="c" style="width:10px">9</i></div>
<div class="ct" style="left:1061px;top:799px;width:160px;font-size:19px;line-height:19px;color:#111"><i class="c" style="width:10px">0</i><i class="d" style="width:10px">.</i><i class="c" style="width:10px">1</i><i class="c" style="width:10px">1</i></div>
<div class="ct" style="left:821px;top:831px;width:120px;font-size:19px;line-height:19px;color:#111"><i class="c" style="width:10px">1</i><i class="c" style="width:10px">0</i><i class="c" style="width:10px">0</i></div>
<div class="ct" style="left:941px;top:831px;width:120px;font-size:19px;line-height:19px;color:#111"><i class="c" style="width:10px">9</i><i class="d" style="width:10px">.</i><i class="c" style="width:10px">3</i><i class="c" style="width:10px">1</i><i class="c" style="width:10px">1</i></div>
<div class="ct" style="left:1061px;top:831px;width:160px;font-size:19px;line-height:19px;color:#111"><i class="c" style="width:10px">0</i><i class="d" style="width:10px">.</i><i class="c" style="width:10px">2</i><i class="c" style="width:10px">9</i><i class="c" style="width:10px">1</i></div>
<div class="ct" style="left:651px;top:863px;width:170px;font-size:19px;line-height:19px;color:#111">单价<i class="c" style="width:10px">(</i><i class="c" style="width:10px">/</i><i class="c" style="width:10px">K</i><i class="c" style="width:10px">G</i><i class="c" style="width:10px">)</i><i class="d" style="width:10px">:</i></div>
<div class="ct" style="left:821px;top:863px;width:120px;font-size:19px;line-height:19px;color:#111"><i class="c" style="width:10px">0</i></div>
<div class="ct" style="left:941px;top:863px;width:120px;font-size:19px;line-height:19px;color:#111">墨膜量<i class="d" style="width:10px">:</i></div>
<div class="ct" style="left:1061px;top:863px;width:160px;font-size:19px;line-height:19px;color:#111"><i class="c" style="width:10px">0</i></div>
</body></html>
